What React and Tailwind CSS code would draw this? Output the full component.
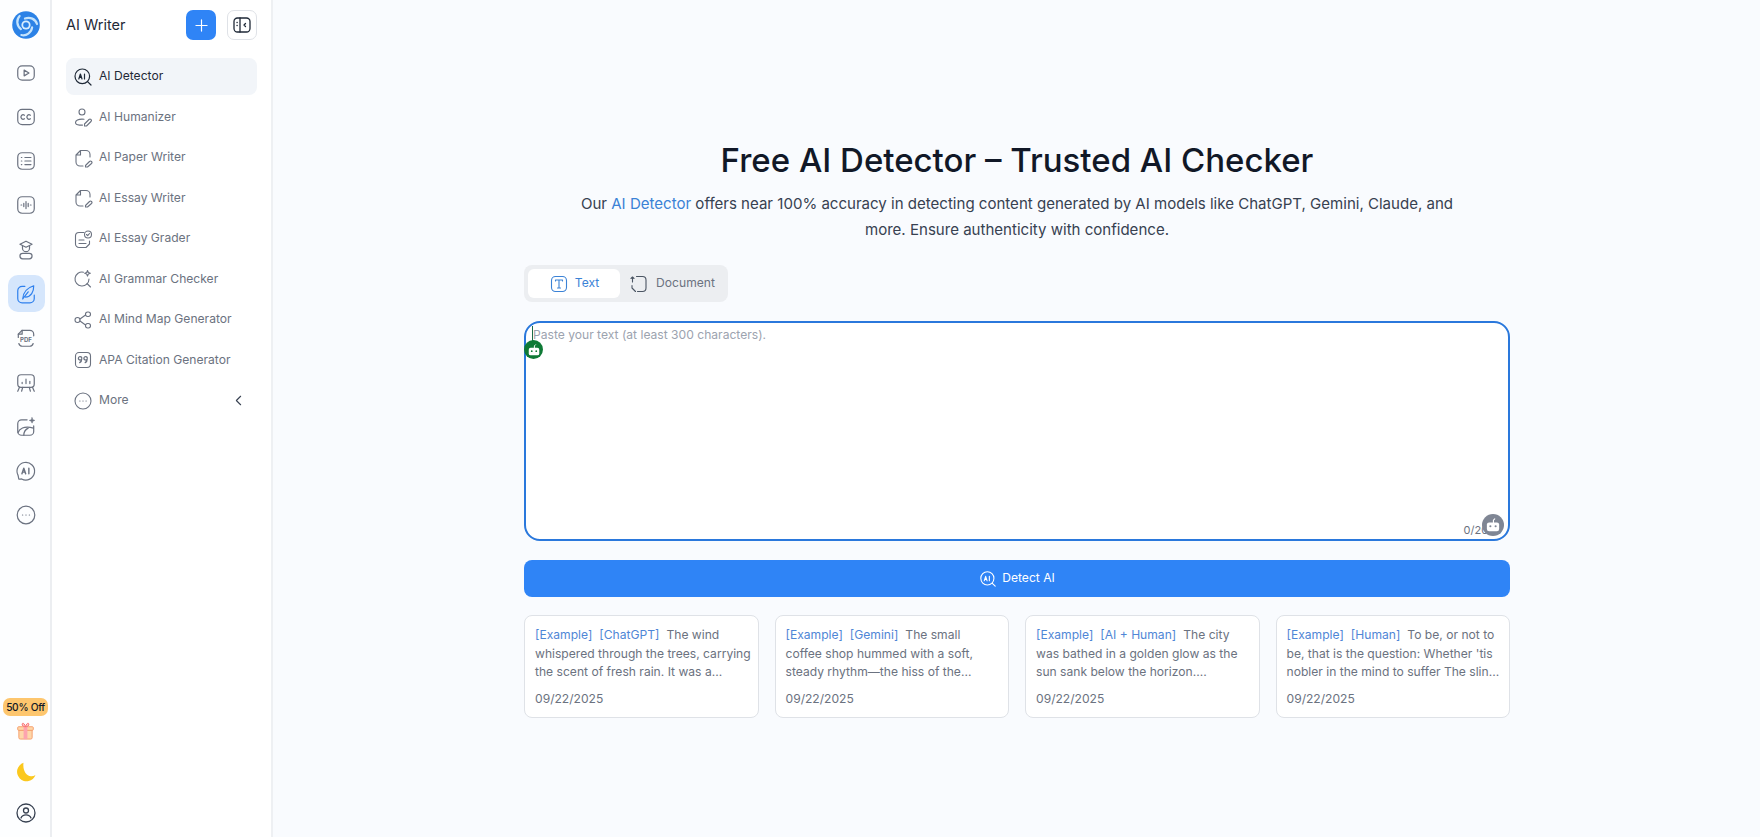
import { Plus, ChevronLeft } from 'lucide-react';

const Ico = ({ size = 22, className = '', children }) => (
  <svg width={size} height={size} viewBox="0 0 20 20" fill="none" stroke="currentColor" strokeWidth="1.100" strokeLinecap="round" strokeLinejoin="round" className={className}>
    {children}
  </svg>
);

const Logo = () => (
  <svg width="28" height="28" viewBox="0 0 28 28" fill="none">
    <circle cx="14" cy="14" r="13.800" fill="#2c82e6" />
    <g stroke="#c4e3fc" strokeWidth="2.200" strokeLinecap="round" fill="none">
      <path d="M13 7.500C18 5.500 23.500 8 25 13" />
      <path d="M13 7.500C18 5.500 23.500 8 25 13" transform="rotate(120 14 14)" />
      <path d="M13 7.500C18 5.500 23.500 8 25 13" transform="rotate(240 14 14)" />
    </g>
    <circle cx="14" cy="14" r="4.600" fill="#d8eefe" />
    <circle cx="14" cy="14" r="2.800" fill="#2c82e6" />
  </svg>
);

const VideoIcon = ({ size }) => (
  <Ico size={size}>
    <rect x="2.500" y="3.500" width="15" height="13" rx="4" />
    <path d="M8.300 7.400v5.200l4.400-2.600z" />
  </Ico>
);
const CcIcon = ({ size }) => (
  <Ico size={size}>
    <rect x="2.500" y="3" width="15" height="14" rx="4" />
    <path d="M8.600 8.400a2 2 0 1 0 0 3.200M14 8.400a2 2 0 1 0 0 3.200" />
  </Ico>
);
const ListIcon = ({ size }) => (
  <Ico size={size}>
    <rect x="2.500" y="2.500" width="15" height="15" rx="4" />
    <path d="M9 6.800h5.500M9 10h5.500M9 13.200h5.500M5.800 6.800h.4M5.800 10h.4M5.800 13.200h.4" />
  </Ico>
);
const WaveIcon = ({ size }) => (
  <Ico size={size}>
    <rect x="2.500" y="2.500" width="15" height="15" rx="4" />
    <path d="M5.500 10h.6M8 8.600v2.800M10 6.800v6.400M12 8.600v2.800M14 10h.6" />
  </Ico>
);
const ScholarIcon = ({ size }) => (
  <Ico size={size}>
    <path d="M10 2 4.500 4.800 10 7.500l5.500-2.700z" />
    <path d="M6.800 6.500v1.800a3.200 3.200 0 0 0 6.400 0V6.500" />
    <rect x="4.500" y="13" width="11" height="5" rx="2.500" />
  </Ico>
);
const WriterIcon = ({ size }) => (
  <Ico size={size}>
    <path d="M9 3H6.500a4 4 0 0 0-4 4v7a4 4 0 0 0 4 4h7a4 4 0 0 0 4-4v-3" />
    <path d="M7 14.500c.3-5 3.500-10 10-12 .2 5.500-2.500 10-7.500 10.300M7 14.500 12 8" />
  </Ico>
);
const PdfIcon = ({ size = 22 }) => (
  <svg width={size} height={size} viewBox="0 0 20 20" fill="none" stroke="currentColor" strokeWidth="1.100" strokeLinecap="round" strokeLinejoin="round">
    <path d="M3 9.500V6.500L6.500 3h7A3.500 3.500 0 0 1 17 6.500v1.500M3.500 15c.5 1.500 1.700 2.500 3 2.500h7c1.300 0 2.500-1 3-2.500" />
    <path d="M3 6.500h3.500V3" />
    <text x="10" y="13.800" textAnchor="middle" fontSize="5.500" fontWeight="700" fontFamily="Inter, sans-serif" fill="currentColor" stroke="none">PDF</text>
  </svg>
);
const SlidesIcon = ({ size }) => (
  <Ico size={size}>
    <rect x="2.500" y="2.500" width="15" height="11.500" rx="3" />
    <path d="M6.500 10.500V9.500M10 10.500V6.500M13.500 10.500V8.500M4 14l-1.500 3.500M16 14l1.500 3.500M7 14l-1 3.500M13 14l1 3.500" />
  </Ico>
);
const ImageAiIcon = ({ size }) => (
  <Ico size={size}>
    <path d="M11 3.500H6A3.500 3.500 0 0 0 2.500 7v7A3.500 3.500 0 0 0 6 17.500h7.500A3.500 3.500 0 0 0 17 14V9" />
    <path d="M2.800 15c1-3 5-6.500 14-4M8 17.500c0-3 2-5.500 4-6.500" />
    <path d="M15.500 1.500l.7 1.800 1.800.7-1.800.7-.7 1.800-.7-1.800-1.800-.7 1.800-.7z" fill="currentColor" strokeWidth=".5" />
  </Ico>
);
const AiChatIcon = ({ size = 22 }) => (
  <svg width={size} height={size} viewBox="0 0 20 20" fill="none" stroke="currentColor" strokeWidth="1.100" strokeLinecap="round" strokeLinejoin="round">
    <path d="M3.500 17.500 2.800 14A8 8 0 1 1 6 17.200z" />
    <path d="M6.300 12.500 8 7.500l1.700 5M6.900 11h2.200M12.600 7.500v5" strokeWidth="1.300" />
  </svg>
);
const DotsIcon = ({ size }) => (
  <Ico size={size}>
    <circle cx="10" cy="10" r="8" />
    <path d="M6.800 10h.2M9.900 10h.2M13 10h.2" />
  </Ico>
);
const DetectIcon = ({ size = 20 }) => (
  <svg width={size} height={size} viewBox="0 0 20 20" fill="none" stroke="currentColor" strokeWidth="1.200" strokeLinecap="round" strokeLinejoin="round">
    <circle cx="9.300" cy="9.300" r="7.300" />
    <path d="m14.800 14.800 3.200 3.200" />
    <path d="M5.800 12 7.400 7l1.600 5M6.400 10.500h2M11.500 7v5" />
  </svg>
);
const HumanIcon = ({ size }) => (
  <Ico size={size}>
    <circle cx="9" cy="5" r="3" />
    <path d="M11 12.300c-.6-.1-1.200-.2-2-.2-3.500 0-6.500 1.500-6.500 3.500s2 2.500 4 2.500h3" />
    <path d="m11.500 17 4.500-4.500a1.400 1.400 0 0 1 2 2L13.500 19h-2z" />
  </Ico>
);
const PaperIcon = ({ size }) => (
  <Ico size={size}>
    <path d="M7.500 2.500h5.500a4 4 0 0 1 4 4V9M3 7l4.500-4.500V7zM3 7v7a4 4 0 0 0 4 4h3" />
    <path d="m12.500 17.500 4-4a1.300 1.300 0 0 1 2 2l-4 3.500h-2z" />
  </Ico>
);
const GraderIcon = ({ size }) => (
  <Ico size={size}>
    <path d="M11 3.500H6A3.500 3.500 0 0 0 2.500 7v8A3.500 3.500 0 0 0 6 18.500h7l3.500-3.500v-3" />
    <path d="M6 11h5M6 14.500h7" />
    <circle cx="15" cy="5.500" r="3.500" />
    <path d="m13.500 5.500 1.200 1.200 1.800-2.200" />
  </Ico>
);
const GrammarIcon = ({ size }) => (
  <Ico size={size}>
    <path d="M10.500 3.200A7 7 0 1 0 16 10" />
    <path d="m14 14.500 3.500 3.500" />
    <path d="M14.500 1.500l.8 2 2 .8-2 .8-.8 2-.8-2-2-.8 2-.8z" />
  </Ico>
);
const MindIcon = ({ size }) => (
  <Ico size={size}>
    <circle cx="4.500" cy="10" r="2.500" />
    <rect x="12.500" y="2" width="5" height="4.500" rx="2.200" />
    <rect x="12.500" y="13.500" width="5" height="4.500" rx="2.200" />
    <path d="M7 9 12.500 5M7 11l5.500 4" />
  </Ico>
);
const QuoteIcon = ({ size = 22 }) => (
  <svg width={size} height={size} viewBox="0 0 20 20" fill="none" stroke="currentColor" strokeWidth="1.100" strokeLinecap="round" strokeLinejoin="round">
    <rect x="2.500" y="2.500" width="15" height="15" rx="3.500" />
    <path d="M8.800 8.300a1.700 1.700 0 1 0-.1.600c0 1.600-.6 2.900-2 3.700M14.300 8.300a1.700 1.700 0 1 0-.1.600c0 1.600-.6 2.900-2 3.700" strokeWidth="1.300" />
  </svg>
);
const SidebarIcon = () => (
  <svg width="20" height="20" viewBox="0 0 20 20" fill="none" stroke="#1f2937" strokeWidth="1.300" strokeLinecap="round" strokeLinejoin="round">
    <rect x="2" y="3" width="16" height="14" rx="3.500" />
    <path d="M8 3v14M5 7.500h.2M5 10.500h.2M13.500 8.500 12 10l1.500 1.500" />
  </svg>
);
const TextIcon = () => (
  <Ico size={20}>
    <rect x="2.500" y="2.500" width="15" height="15" rx="4" />
    <path d="M6.500 7V6h7v1M10 6v8M8.500 14h3" />
  </Ico>
);
const DocIcon = () => (
  <Ico size={20}>
    <path d="M3.500 8V3M3.500 3 2 4.500M3.500 3 5 4.500" />
    <path d="M7.500 2.500h6A3.500 3.500 0 0 1 17 6v8a3.500 3.500 0 0 1-3.500 3.500H8.500" />
    <path d="M3 11.500V14l3.500 3.500" />
  </Ico>
);
const Bot = ({ size = 13, eye = '#7f8694' }) => (
  <svg width={size} height={size} viewBox="0 0 16 16" fill="white">
    <rect x="1" y="5" width="14" height="10" rx="2.500" />
    <path d="M8.500 5V2.500L10 1" stroke="white" strokeWidth="1.300" fill="none" strokeLinecap="round" />
    <circle cx="5" cy="9.500" r="1.200" fill={eye} />
    <circle cx="11" cy="9.500" r="1.200" fill={eye} />
  </svg>
);
const Gift = () => (
  <svg width="19" height="20" viewBox="0 0 20 20" fill="none">
    <path d="M3 9h14v8a1.500 1.500 0 0 1-1.500 1.500h-11A1.500 1.500 0 0 1 3 17z" fill="#fed7aa" stroke="#f59e6c" />
    <rect x="1.800" y="5.500" width="16.400" height="3.800" rx="1" fill="#fed7aa" stroke="#f59e6c" />
    <path d="M8 5.500h4v13H8z" fill="#fda4af" />
    <path d="M10 5.500C8 5.500 6 4.500 6.500 2.500 7 1 9 2 10 5.500ZM10 5.500c2 0 4-1 3.500-3C13 1 11 2 10 5.500Z" stroke="#f87171" fill="#fecaca" />
  </svg>
);
const Moon = () => (
  <svg width="20" height="20" viewBox="0 0 20 20">
    <path d="M7.500.8a9.500 9.500 0 1 0 12 12.200c-1.500 1-3 1.300-4.500 1.200C10 14 6.500 8 7.500.8Z" fill="#fbc81e" />
  </svg>
);
const UserIcon = () => (
  <svg width="20" height="20" viewBox="0 0 20 20" fill="none" stroke="#374151" strokeWidth="1.300" strokeLinecap="round">
    <circle cx="10" cy="10" r="9" />
    <circle cx="10" cy="7.500" r="2.500" />
    <path d="M5 15c.8-2.200 2.800-3.200 5-3.200s4.200 1 5 3.200" />
  </svg>
);

const railIcons = [VideoIcon, CcIcon, ListIcon, WaveIcon, ScholarIcon, WriterIcon, PdfIcon, SlidesIcon, ImageAiIcon, AiChatIcon, DotsIcon];

const menu = [
  { label: 'AI Detector', icon: DetectIcon, active: true },
  { label: 'AI Humanizer', icon: HumanIcon },
  { label: 'AI Paper Writer', icon: PaperIcon },
  { label: 'AI Essay Writer', icon: PaperIcon },
  { label: 'AI Essay Grader', icon: GraderIcon },
  { label: 'AI Grammar Checker', icon: GrammarIcon },
  { label: 'AI Mind Map Generator', icon: MindIcon },
  { label: 'APA Citation Generator', icon: QuoteIcon },
  { label: 'More', icon: DotsIcon, more: true },
];

const examples = [
  { tag: '[ChatGPT]', text: 'The wind whispered through the trees, carrying the scent of fresh rain. It was a...' },
  { tag: '[Gemini]', text: 'The small\ncoffee shop hummed with a soft,\nsteady rhythm—the hiss of the...' },
  { tag: '[AI + Human]', text: 'The city was bathed in a golden glow as the sun sank below the horizon....' },
  { tag: '[Human]', text: "To be, or not to be, that is the question: Whether 'tis nobler in the mind to suffer The slin..." },
];

export default function App() {
  return (
    <div className="flex h-screen overflow-hidden bg-[#f9fbfe] font-['Inter',sans-serif]">
      <aside className="w-[52px] shrink-0 flex flex-col items-center bg-[#fdfeff] border-r-2 border-[#eceef1]">
        <div className="mt-[11px] ml-[2px]"><Logo /></div>
        <nav className="mt-[15px] flex flex-col gap-[7.300px] w-full items-center">
          {railIcons.map((Icon, i) => (
            <div
              key={i}
              className={`w-[37px] h-[37px] ml-[2px] rounded-[10px] flex items-center justify-center ${i === 5 ? 'bg-[#d5e6fc] text-[#2f80ed]' : 'text-[#6b7280]'}`}
            >
              <Icon size={22} />
            </div>
          ))}
        </nav>
        <div className="mt-auto flex flex-col items-center pb-[14px] ml-px">
          <span className="h-[18px] px-[3px] rounded-[7px] bg-[#fdc66e] text-[10.200px] leading-[18px] font-medium tracking-[-0.300px] text-[#111827]">50% Off</span>
          <div className="mt-[5px]"><Gift /></div>
          <div className="mt-[21px]"><Moon /></div>
          <div className="mt-[21px]"><UserIcon /></div>
        </div>
      </aside>

      <aside className="w-[221px] shrink-0 bg-white border-r-2 border-[#eef0f3] pl-[14px] pr-[14px]">
        <div className="flex items-center h-[50px]">
          <h2 className="text-[14.500px] text-[#1f2937] flex-1">AI Writer</h2>
          <button className="w-[30px] h-[30px] rounded-[7px] bg-[#2f84f6] text-white flex items-center justify-center">
            <Plus size={19} strokeWidth={1.500} />
          </button>
          <button className="ml-[11px] w-[30px] h-[30px] rounded-[7px] bg-white border border-[#dfe2e7] flex items-center justify-center">
            <SidebarIcon />
          </button>
        </div>
        <ul className="mt-[8px]">
          {menu.map(item => (
            <li
              key={item.label}
              className={`h-[37px] mb-[3.500px] rounded-[8px] flex items-center pl-[7px] pr-[10px] text-[12.100px] ${item.active ? 'bg-[#f2f5f9] text-[#1f2937]' : 'text-[#6b7280]'}`}
            >
              <span className={`w-[20px] h-[20px] flex items-center justify-center ${item.active ? 'text-[#1f2937]' : 'text-[#6b7280]'}`}>
                <item.icon size={20} />
              </span>
              <span className="ml-[6px] flex-1">{item.label}</span>
              {item.more && <ChevronLeft size={17} strokeWidth={1.500} className="text-[#374151]" />}
            </li>
          ))}
        </ul>
      </aside>

      <main className="flex-1 flex justify-center pl-px">
        <div className="w-[986px] pt-[137px]">
          <h1 className="text-[33px] leading-[46px] font-medium text-[#111827] text-center">Free AI Detector – Trusted AI Checker</h1>
          <p className="mt-[8px] text-[15.050px] leading-[25.500px] text-[#374151] text-center px-[50px]">
            Our <span className="text-[#3b82d6]">AI Detector</span> offers near 100% accuracy in detecting content generated by AI models like ChatGPT, Gemini, Claude, and more. Ensure authenticity with confidence.
          </p>

          <div className="mt-[23px] flex items-center h-[37px] w-[204px] p-[4px] rounded-[8px] bg-[#eceef1]">
            <button className="w-[92px] h-[29px] rounded-[6px] bg-white text-[#3b82d6] text-[12.100px] flex items-center justify-center gap-[6px]">
              <TextIcon />Text
            </button>
            <button className="flex-1 h-[29px] text-[#6b7280] text-[12.100px] flex items-center justify-center gap-[7px]">
              <span className="text-[#4b5563]"><DocIcon /></span>Document
            </button>
          </div>

          <div className="relative mt-[19px] h-[220px] rounded-[16px] border-2 border-[#2a78dc] bg-white">
            <textarea
              readOnly
              placeholder="Paste your text (at least 300 characters)."
              className="w-full h-full resize-none bg-transparent outline-none px-[7px] py-[2px] text-[12.100px] leading-[20px] placeholder:text-[#9ca3af] rounded-[14px]"
            />
            <span className="absolute left-[6px] top-[3px] w-px h-[20px] bg-[#1a6b4a]" />
            <span className="absolute left-[-2px] top-[17px] w-[19px] h-[19px] rounded-full bg-[#0f7a36] flex items-center justify-center">
              <Bot size={12} eye="#0f7a36" />
            </span>
            <span className="absolute right-[6px] bottom-[1px] text-[11px] leading-[16px] text-[#6b7280]">0/2000</span>
            <span className="absolute right-[4px] bottom-[3px] w-[22px] h-[22px] rounded-full bg-[#7f8694] flex items-center justify-center">
              <Bot size={14} />
            </span>
          </div>

          <button className="mt-[19px] w-full h-[37px] rounded-[8px] bg-[#2f84f6] text-white text-[12.100px] flex items-center justify-center gap-[5px]">
            <DetectIcon size={18} />Detect AI
          </button>

          <div className="mt-[18px] grid grid-cols-4 gap-[16px]">
            {examples.map(ex => (
              <div key={ex.tag} className="h-[103px] rounded-[8px] border border-[#dfe2e7] bg-white pl-[10px] pr-[6px] pt-[10px]">
                <p className="text-[12.100px] leading-[18.500px] text-[#6b7280]">
                  <span className="text-[#4f86d6]">[Example]</span>
                  <span className="text-[#4f86d6] ml-[7px]">{ex.tag}</span>
                  <span className="ml-[7px] whitespace-pre-line">{ex.text}</span>
                </p>
                <p className="mt-[8px] text-[12.100px] leading-[18px] text-[#6b7280]">09/22/2025</p>
              </div>
            ))}
          </div>
        </div>
      </main>
    </div>
  );
}
